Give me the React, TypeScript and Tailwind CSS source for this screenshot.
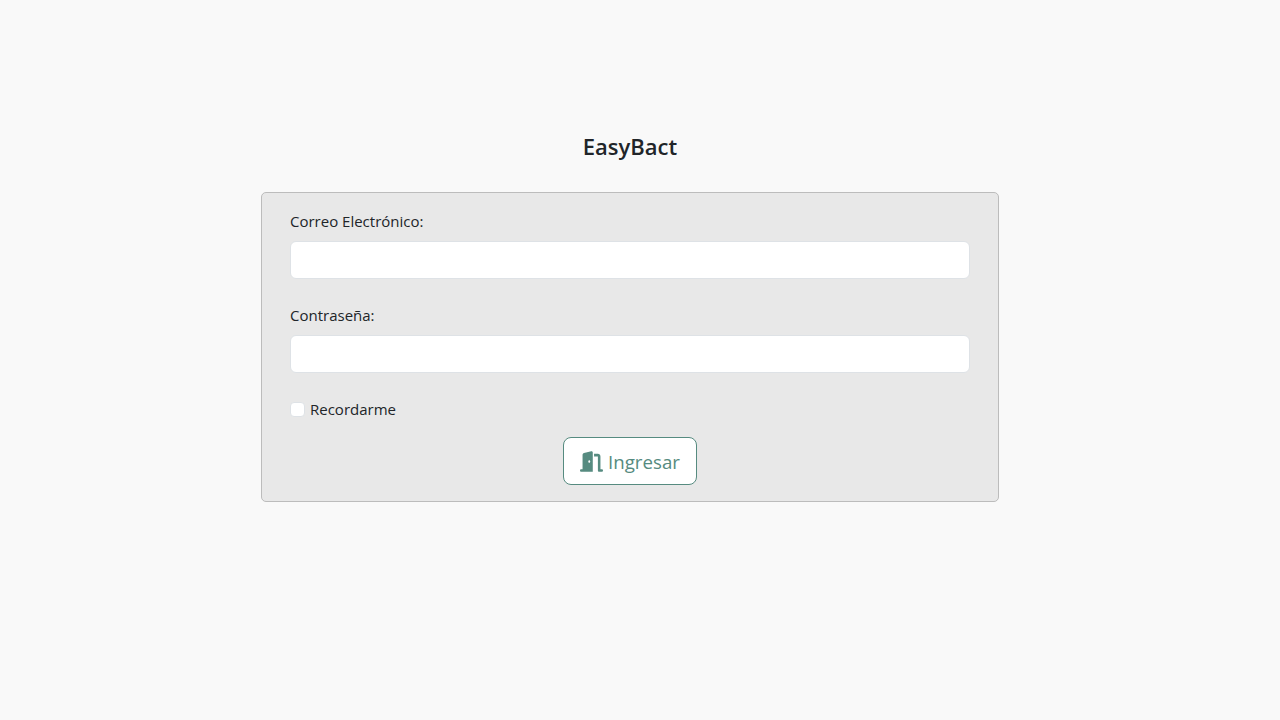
import { useState } from "react";
import { FaDoorOpen } from "react-icons/fa6";

export default function App() {
  const [remember, setRemember] = useState(false);

  return (
    <div className="min-h-screen bg-[#f9f9f9] pr-5 font-['Open_Sans','Noto_Sans',sans-serif] text-[#212529]">
      <div className="mx-auto flex w-[738px] flex-col pt-[129px]">
        <h1 className="mb-[29px] text-center text-[22px] leading-[34px] font-semibold">EasyBact</h1>

        <form className="rounded-[5px] border border-[#bcbcbc] bg-[#e8e8e8] px-[28px] py-[16px]">
          <label className="mb-[8px] block text-[15px] leading-[24px]">Correo Electrónico:</label>
          <input type="email" className="mb-[24px] block h-[38px] w-full rounded-[6px] border border-[#dee2e6] bg-white px-3" />

          <label className="mb-[8px] block text-[15px] leading-[24px]">Contraseña:</label>
          <input type="password" className="mb-[24px] block h-[38px] w-full rounded-[6px] border border-[#dee2e6] bg-white px-3" />

          <label className="mb-[16px] flex h-[24px] items-center gap-[5px] text-[15px] leading-[24px]">
            <input
              type="checkbox"
              checked={remember}
              onChange={(e) => setRemember(e.target.checked)}
              className="h-[15px] w-[15px] appearance-none rounded-[4px] border border-[#dee2e6] bg-white"
            />
            Recordarme
          </label>

          <div className="flex justify-center">
            <button type="button" className="flex h-[48px] w-[134px] items-center justify-center gap-[5px] rounded-[8px] border border-[#568b80] bg-white text-[18.7px] text-[#568b80]">
              <FaDoorOpen size={23} />
              <span className="pt-[2px]">Ingresar</span>
            </button>
          </div>
        </form>
      </div>
    </div>
  );
}
